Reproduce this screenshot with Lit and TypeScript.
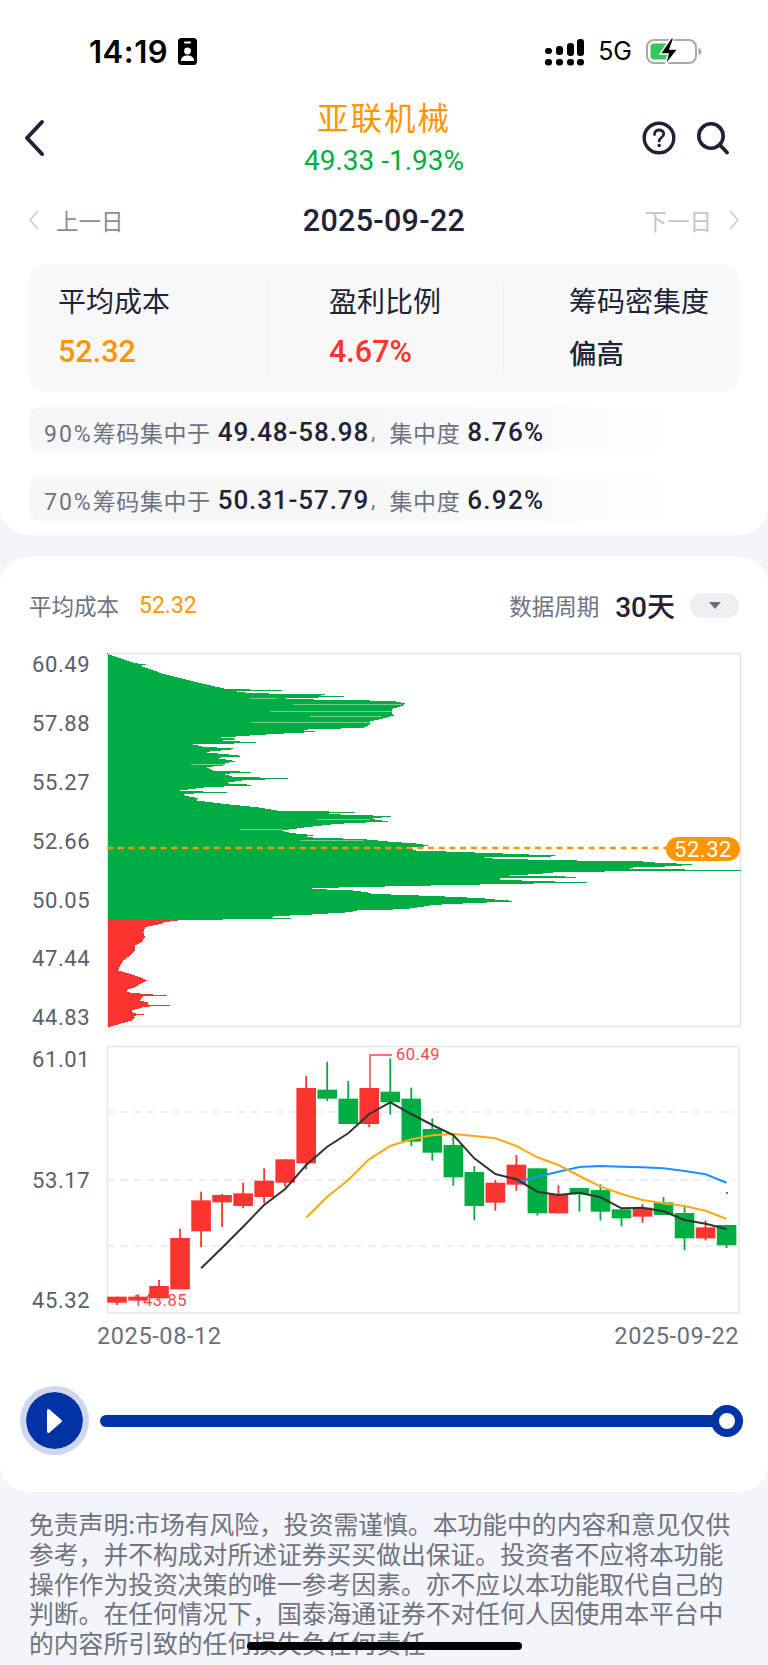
import { LitElement, css, html, svg } from "lit";
import { customElement } from "lit/decorators.js";

const GREEN = "#00ad42";
const RED = "#fb342f";
const ORANGE = "#ff9500";

/** Convert points read from a 3x crop ([cropY, cropX]) to page coordinates ([y, x]). */
function crop(ox: number, oy: number, pts: number[][]): number[][] {
  return pts.map(([y, x]) => [oy + y / 3, ox + x / 3]);
}

// Right edge of the chip distribution, top to bottom.
const PROFILE: number[][] = [
  ...crop(90, 640, [
    [40, 52], [68, 135], [72, 168], [76, 150], [100, 220], [125, 320], [146, 410], [149, 620], [153, 440],
    [158, 480], [163, 760], [166, 660], [169, 815], [173, 560], [178, 700], [181, 910], [189, 945], [197, 935],
    [205, 905], [216, 905], [225, 912], [235, 875], [243, 840], [252, 840], [262, 820], [268, 620], [274, 685],
    [280, 560], [285, 480], [292, 380], [295, 460], [300, 400], [307, 515], [312, 310], [318, 335], [325, 445],
    [335, 340], [347, 470], [352, 375], [362, 440], [368, 405], [375, 400], [380, 350], [390, 370], [395, 505],
    [400, 400], [408, 425], [414, 593], [420, 455], [428, 400], [434, 508], [440, 350], [450, 270], [456, 410],
    [460, 280], [466, 285], [473, 325], [480, 320], [490, 400], [500, 500], [510, 560], [515, 820], [520, 690],
    [527, 912], [535, 840], [543, 895], [550, 740], [560, 650], [570, 575], [578, 605], [584, 675], [590, 640],
    [596, 820], [603, 895], [610, 990], [616, 1020],
  ]),
  ...crop(400, 820, [
    [75, 148], [80, 20], [90, 48], [97, 255], [107, 517], [111, 255], [115, 285], [120, 530], [123, 730],
    [127, 775], [131, 885], [137, 828], [143, 635], [150, 1022], [154, 480], [160, 420], [165, 330], [170, 603],
    [174, 300], [178, 300], [186, 562], [193, 185],
  ]),
  ...crop(90, 830, [[168, 885], [171, 748], [175, 640], [179, 780], [185, 830], [190, 845], [194, 960]]),
  ...crop(400, 820, [[228, 135], [233, 245], [238, 295], [242, 360], [248, 210], [253, 105], [266, 15]]),
  ...crop(90, 830, [
    [240, 800], [245, 780], [252, 665], [256, 580], [260, 525], [264, 603], [268, 330], [269.5, 270],
    [270, 265], [275, 225], [280, 215], [285, 190], [290, 165], [305, 160], [320, 165], [335, 155], [345, 135],
    [360, 135], [375, 120], [390, 100], [405, 90], [420, 85], [430, 120], [440, 150], [450, 172], [460, 150],
    [470, 135], [478, 110], [485, 110], [490, 160], [495, 232], [498, 160], [503, 155], [510, 150], [516, 175],
    [522, 175], [525, 240], [529, 160], [532, 155], [540, 125], [548, 130], [552, 162], [556, 130], [562, 135],
    [570, 125], [580, 90], [590, 55],
  ]),
];

// Thin paler rows inside the green mass: [cropY, fromX, toX], crop at (90,640).
const PALE_ROWS = [
  [173, 480, 560], [193, 610, 935], [212, 540, 905], [229, 660, 875], [247, 484, 840], [372, 303, 405],
  [538, 680, 840], [568, 450, 575], [600, 630, 820],
];

const RED_FROM = 920;

/** One 1px row per y, interpolated along the profile. */
function profilePath(from: number, to: number): string {
  let d = "";
  let i = 0;
  for (let y = from; y < to; y++) {
    while (i < PROFILE.length - 2 && PROFILE[i + 1][0] < y) i++;
    const [y0, x0] = PROFILE[i];
    const [y1, x1] = PROFILE[i + 1];
    const t = y1 === y0 ? 0 : Math.min(1, Math.max(0, (y - y0) / (y1 - y0)));
    d += `M107.5 ${y}H${(x0 + (x1 - x0) * t).toFixed(1)}v1H107.5z`;
  }
  return d;
}

// up = red, down = green: [wickTop, bodyTop, bodyBottom, wickBottom] in crop Y units
const CANDLES: { up: boolean; v: number[] }[] = [
  [1, 770, 770, 788, 795], [1, 768, 770, 782, 782], [1, 720, 738, 775, 775], [1, 566, 594, 748, 748],
  [1, 455, 481, 574, 622], [1, 462, 465, 487, 561], [1, 428, 460, 498, 505], [1, 385, 422, 471, 490],
  [1, 358, 358, 428, 440], [1, 108, 144, 370, 388], [0, 65, 149, 176, 183], [0, 123, 176, 252, 252],
  [1, 144, 144, 252, 262], [0, 55, 155, 187, 224], [0, 143, 176, 305, 318], [0, 235, 267, 338, 362],
  [0, 282, 315, 412, 437], [0, 378, 396, 498, 541], [1, 420, 428, 488, 512], [1, 345, 374, 434, 452],
  [0, 385, 385, 520, 527], [1, 436, 462, 520, 520], [0, 444, 444, 463, 515], [0, 433, 450, 515, 542],
  [0, 508, 508, 535, 559], [1, 492, 503, 530, 548], [0, 471, 487, 525, 525], [0, 497, 519, 595, 631],
  [1, 541, 562, 595, 601], [0, 555, 555, 616, 624],
].map(([u, ...v]) => ({ up: u === 1, v }));

const MA5 = [685, 623, 560, 495, 447, 375, 320, 280, 222, 187, 222, 255, 285, 355, 402, 418, 455, 465, 458, 472, 505, 503, 514, 540, 551, 567];
const MA10 = [533, 470, 420, 358, 318, 298, 286, 282, 288, 295, 318, 352, 375, 408, 440, 462, 480, 490, 498, 512, 537];
const MA20 = [425, 410, 395, 381, 378, 380, 382, 385, 393, 403, 428];

const cx = (i: number) => 117 + 21.02 * i;
const cy = (v: number) => 1040 + v / 3;

function maLine(values: number[], start: number): string {
  return values.map((v, i) => `${cx(start + i).toFixed(1)},${cy(v).toFixed(1)}`).join(" ");
}

const PRICE_LABELS = [
  ["60.49", 664], ["57.88", 723], ["55.27", 782], ["52.66", 841], ["50.05", 900], ["47.44", 958], ["44.83", 1017],
] as const;
const KLINE_LABELS = [["61.01", 1059], ["53.17", 1180], ["45.32", 1300]] as const;

const DISCLAIMER =
  "免责声明:市场有风险，投资需谨慎。本功能中的内容和意见仅供参考，并不构成对所述证券买买做出保证。投资者不应将本功能操作作为投资决策的唯一参考因素。亦不应以本功能取代自己的判断。在任何情况下，国泰海通证券不对任何人因使用本平台中的内容所引致的任何损失负任何责任";

@customElement("app-root")
export class AppRoot extends LitElement {
  private renderSignal() {
    const cols = [
      [545, 47, 6],
      [556, 45, 9],
      [567, 42, 13],
      [577, 38, 17],
    ];
    return html`<svg class="signal" viewBox="545 36 40 30" width="40" height="30">
      ${cols.map(
        ([x, y, h]) => svg`
          <rect x=${x} y=${y} width="7" height=${h} rx="3" fill="#000" />
          <rect x=${x} y="58" width="7" height="6.5" rx="3" fill="#000" />`,
      )}
    </svg>`;
  }

  private renderBattery() {
    return html`<svg class="battery" viewBox="0 0 56 30" width="56" height="30">
      <rect x="1" y="3" width="49" height="23" rx="7" fill="none" stroke="#a9a9a9" stroke-width="2" />
      <path d="M52.5 11c2 .5 3 2 3 3.5s-1 3-3 3.5z" fill="#a9a9a9" />
      <rect x="4.5" y="6.5" width="20" height="16" rx="3.5" fill="#34c759" />
      <path d="M25 1 L14 17 H22 L19 29 L32 12 H24 L28 1 Z" fill="#000" stroke="#fff" stroke-width="1.5" />
    </svg>`;
  }

  private renderDistribution() {
    return html`<svg class="chart" viewBox="0 640 768 400" width="768" height="400">
      ${PRICE_LABELS.map(([t, y]) => svg`<text class="axis" x="32" y=${y + 8}>${t}</text>`)}
      <rect x="107.5" y="653.5" width="633" height="373" fill="#fff" stroke="#e2e3e6" stroke-width="1.5" />
      <path d=${profilePath(653, RED_FROM)} fill=${GREEN} shape-rendering="crispEdges" />
      <path d=${profilePath(RED_FROM, 1027)} fill=${RED} shape-rendering="crispEdges" />
      ${PALE_ROWS.map(
        ([y, a, b]) => svg`<rect x=${90 + a / 3} y=${Math.round(640 + y / 3)} width=${(b - a) / 3} height="1" fill="#6fcf95" />`,
      )}
      <line x1="107" y1="848" x2="668" y2="848" stroke=${ORANGE} stroke-width="2.5" stroke-dasharray="6 4.7" />
      <rect x="666" y="837" width="74" height="24" rx="12" fill=${ORANGE} />
      <text class="pill" x="703" y="857" text-anchor="middle">52.32</text>
    </svg>`;
  }

  private renderKline() {
    return html`<svg class="chart" viewBox="0 1040 768 280" width="768" height="280">
      ${KLINE_LABELS.map(([t, y]) => svg`<text class="axis" x="32" y=${y + 8}>${t}</text>`)}
      <rect x="107.5" y="1046.5" width="631.5" height="266.5" fill="#fff" stroke="#e6e7ea" stroke-width="1.5" />
      ${[1112, 1180, 1246].map(
        (y) => svg`<line x1="108" y1=${y} x2="735" y2=${y} stroke="#dcdcdc" stroke-width="1.2" stroke-dasharray="7 6" />`,
      )}
      <text class="mark" x="187" y="1305.5" text-anchor="end">143.85</text>
      ${CANDLES.map(({ up, v }, i) => {
        const color = up ? RED : GREEN;
        const x = cx(i);
        return svg`
          <line x1=${x} y1=${cy(v[0])} x2=${x} y2=${cy(v[3])} stroke=${color} stroke-width="1.8" />
          <rect x=${x - 9.8} y=${cy(v[1])} width="19.6" height=${cy(v[2]) - cy(v[1])} fill=${color} />`;
      })}
      <path d="M370 1088 V1055 H392" fill="none" stroke="#f5484a" stroke-width="1.5" />
      <text class="mark" x="396" y="1060">60.49</text>
      <polyline points=${maLine(MA20, 19)} fill="none" stroke="#1e90ff" stroke-width="2" />
      <polyline points=${maLine(MA10, 9)} fill="none" stroke="#ffa90d" stroke-width="2" />
      <polyline points=${maLine(MA5, 4)} fill="none" stroke="#333" stroke-width="2" />
      <rect x="726" y="1192" width="2" height="2" fill="#b04be8" />
    </svg>`;
  }

  private renderConcentration(pct: string, range: string, ratio: string) {
    return html`<div class="conc">
      <span class="lab"><span class="pct">${pct}</span>筹码集中于</span>
      <b class="range">${range}</b><span class="comma">,</span>
      <span class="lab">集中度</span>
      <b class="ratio">${ratio}</b>
    </div>`;
  }

  render() {
    return html`
      <section class="card top">
        <div class="status">
          <div class="clock">
            <span class="time">14:19</span>
            <svg viewBox="0 0 19 27" width="19" height="27">
              <rect width="19" height="27" rx="3.5" fill="#000" />
              <rect x="6" y="3.5" width="7" height="2" rx="1" fill="#fff" />
              <circle cx="9.5" cy="13" r="3.4" fill="#fff" />
              <path d="M3 23c0-4 3-5.5 6.5-5.5S16 19 16 23z" fill="#fff" />
            </svg>
          </div>
          <div class="cell">
            ${this.renderSignal()}
            <span class="net">5G</span>
            ${this.renderBattery()}
          </div>
        </div>

        <header class="nav">
          <svg class="back" viewBox="0 0 24 38" width="24" height="38">
            <path d="M20 3 L5 19 L20 35" fill="none" stroke="#1f2336" stroke-width="4" stroke-linecap="round" stroke-linejoin="round" />
          </svg>
          <div class="title">
            <div class="name">亚联机械</div>
            <div class="quote">49.33 -1.93%</div>
          </div>
          <div class="actions">
            <svg viewBox="0 0 34 34" width="34" height="34">
              <circle cx="17" cy="17" r="14.8" fill="none" stroke="#1f2336" stroke-width="3.4" />
              <path d="M12.5 13.5c0-3 2.2-4.500 4.700-4.500s4.500 1.600 4.500 4c0 3.500-4.500 3.500-4.500 7" fill="none" stroke="#1f2336" stroke-width="2.8" stroke-linecap="round" />
              <circle cx="17.2" cy="24.5" r="1.8" fill="#1f2336" />
            </svg>
            <svg viewBox="0 0 34 34" width="34" height="34">
              <circle cx="15" cy="15" r="12.2" fill="none" stroke="#1f2336" stroke-width="3.6" />
              <path d="M24 24 L31 31.5" fill="none" stroke="#1f2336" stroke-width="3.8" stroke-linecap="round" />
            </svg>
          </div>
        </header>

        <div class="dates">
          <div class="day prev">
            <svg viewBox="0 0 12 22" width="12" height="22"><path d="M10 2 L2 11 L10 20" fill="none" stroke="#c8cad2" stroke-width="1.5" /></svg>
            <span>上一日</span>
          </div>
          <div class="date">2025-09-22</div>
          <div class="day next">
            <span>下一日</span>
            <svg viewBox="0 0 12 22" width="12" height="22"><path d="M2 2 L10 11 L2 20" fill="none" stroke="#c8cad2" stroke-width="1.5" /></svg>
          </div>
        </div>

        <div class="stats">
          <div class="stat first">
            <div class="stat-label">平均成本</div>
            <div class="stat-value orange">52.32</div>
          </div>
          <div class="stat second">
            <div class="stat-label">盈利比例</div>
            <div class="stat-value red">4.67%</div>
          </div>
          <div class="stat third">
            <div class="stat-label">筹码密集度</div>
            <div class="stat-text">偏高</div>
          </div>
        </div>

        ${this.renderConcentration("90%", "49.48-58.98", "8.76%")}
        ${this.renderConcentration("70%", "50.31-57.79", "6.92%")}
      </section>

      <section class="card bottom">
        <div class="chart-head">
          <div class="head-left">
            <span class="muted">平均成本</span>
            <span class="head-value">52.32</span>
          </div>
          <div class="head-right">
            <span class="muted">数据周期</span>
            <span class="period">30天</span>
            <span class="select"><i class="caret"></i></span>
          </div>
        </div>
        ${this.renderDistribution()} ${this.renderKline()}
        <div class="axis-dates">
          <span>2025-08-12</span>
          <span>2025-09-22</span>
        </div>
        <div class="player">
          <div class="play">
            <svg viewBox="0 0 18 26" width="18" height="26">
              <path d="M3.5 1.5 L15.5 12 Q16.5 13 15.5 14 L3.5 24.5 Q1 26 1 23 V3 Q1 0 3.5 1.5 Z" fill="#fff" />
            </svg>
          </div>
          <div class="track"><span class="thumb"></span></div>
        </div>
      </section>

      <p class="disclaimer">${DISCLAIMER}</p>
      <div class="home"></div>
    `;
  }

  static styles = css`
    :host {
      display: block;
      position: relative;
      height: 1665px;
      overflow: hidden;
      background: #f4f5fa;
      font-family: Roboto, "Noto Sans CJK SC", sans-serif;
      color: #1f2336;
    }

    .card {
      background: #fff;
    }

    .top {
      height: 535px;
      border-radius: 0 0 28px 28px;
      box-sizing: border-box;
    }

    .bottom {
      margin-top: 22px;
      height: 935px;
      border-radius: 28px;
      box-sizing: border-box;
      padding-top: 29px;
    }

    .status {
      height: 100px;
      display: flex;
      align-items: center;
      justify-content: space-between;
      box-sizing: border-box;
      padding: 3px 66px 0 89px;
      color: #000;
    }

    .clock,
    .cell {
      display: flex;
      align-items: center;
    }

    .clock {
      gap: 10px;
    }

    .time {
      font-family: Inter, sans-serif;
      font-size: 31px;
      font-weight: 600;
      letter-spacing: 0.5px;
      line-height: 1;
    }

    .net {
      font-family: Inter, sans-serif;
      font-size: 25px;
      margin: 0 14px 0 13px;
      line-height: 1;
    }

    .nav {
      height: 75px;
      display: grid;
      grid-template-columns: 1fr auto 1fr;
      align-items: center;
      padding: 0 22px;
    }

    .back {
      margin-top: -4px;
    }

    .title {
      text-align: center;
      padding-bottom: 2px;
    }

    .name {
      color: #ff9500;
      font-size: 31.5px;
      letter-spacing: 2px;
      line-height: 40px;
    }

    .quote {
      color: #00ad42;
      font-size: 28px;
      line-height: 34px;
      margin-top: 4px;
    }

    .actions {
      display: flex;
      justify-content: flex-end;
      gap: 20px;
      margin-top: -4px;
      padding-right: 16px;
    }

    .dates {
      height: 50px;
      margin-top: 20px;
      display: flex;
      align-items: center;
      justify-content: space-between;
      padding: 0 28px;
    }

    .day {
      display: flex;
      align-items: center;
      gap: 16px;
      font-size: 22.5px;
      color: #8a8d99;
    }

    .day.next {
      color: #c3c5cd;
    }

    .date {
      font-size: 30.5px;
      font-weight: 500;
      letter-spacing: 0.3px;
    }

    .stats {
      margin: 19px 29px 0;
      height: 128px;
      padding: 18px 0;
      box-sizing: border-box;
      background: #f8f8f8;
      border-radius: 14px;
      display: grid;
      grid-template-columns: 237px 237px 1fr;
    }

    .stat {
      border-left: 1.5px solid #eeeeee;
      box-sizing: border-box;
    }

    .stat.first {
      border-left: 0;
      padding-left: 29px;
    }

    .stat.second {
      padding-left: 62px;
    }

    .stat.third {
      padding-left: 65px;
    }

    .stat-label {
      font-size: 28px;
      line-height: 36px;
      white-space: nowrap;
      margin-top: 3px;
    }

    .stat-value {
      font-size: 30.5px;
      font-weight: 500;
      line-height: 36px;
      margin-top: 13px;
    }

    .stat-text {
      font-size: 27.5px;
      font-weight: 500;
      line-height: 36px;
      margin-top: 16px;
    }

    .orange {
      color: #ff9500;
    }

    .red {
      color: #fb342f;
    }

    .conc {
      margin: 15px 29px 0;
      height: 46px;
      box-sizing: border-box;
      padding: 3px 0 0 15px;
      display: flex;
      align-items: center;
      border-radius: 12px;
      background: linear-gradient(90deg, #f7f7f8 50%, #ffffff 95%);
      white-space: nowrap;
    }

    .conc + .conc {
      margin-top: 22px;
    }

    .lab {
      font-size: 23px;
      color: #6f7280;
      letter-spacing: 0.6px;
    }

    .pct {
      letter-spacing: 2px;
    }

    .range,
    .ratio {
      font-size: 26px;
      font-weight: 500;
      letter-spacing: 0.9px;
    }

    .range {
      margin-left: 7px;
    }

    .ratio {
      margin-left: 7px;
      letter-spacing: 1.3px;
    }

    .comma {
      font-size: 22px;
      color: #6f7280;
      margin-right: 14px;
      margin-left: 2px;
    }

    .chart-head {
      height: 38px;
      padding: 0 29px;
      display: flex;
      align-items: center;
      justify-content: space-between;
    }

    .head-left,
    .head-right {
      display: flex;
      align-items: center;
    }

    .muted {
      font-size: 22.5px;
      color: #6f7280;
    }

    .head-value {
      font-size: 23px;
      color: #ff9500;
      margin-left: 20px;
    }

    .period {
      font-size: 28px;
      font-weight: 500;
      margin-left: 16px;
    }

    .select {
      width: 49px;
      height: 25px;
      margin-left: 15px;
      border-radius: 12px;
      background: #eeeff2;
      display: flex;
      align-items: center;
      justify-content: center;
    }

    .caret {
      width: 0;
      height: 0;
      border-left: 6px solid transparent;
      border-right: 6px solid transparent;
      border-top: 7px solid #6a6d78;
    }

    .chart {
      display: block;
    }

    .chart-head + .chart {
      margin-top: 16px;
    }

    .chart text {
      font-family: Roboto, sans-serif;
    }

    .axis {
      font-size: 22px;
      fill: #5b5e69;
      letter-spacing: 0.6px;
    }

    .mark {
      font-size: 16.5px;
      fill: #f5484a;
      letter-spacing: 0.5px;
    }

    .pill {
      font-size: 22px;
      fill: #fff;
      letter-spacing: 0.5px;
    }

    .axis-dates {
      height: 32px;
      padding: 0 29px 0 97px;
      display: flex;
      justify-content: space-between;
      align-items: center;
      font-size: 23.5px;
      letter-spacing: 0.6px;
      color: #6b6e7a;
    }

    .player {
      margin-top: 34px;
      padding: 0 25px 0 20px;
      display: flex;
      align-items: center;
      gap: 11px;
    }

    .play {
      width: 57px;
      height: 57px;
      border: 6px solid #cfd6ee;
      border-radius: 50%;
      background: #0033a5;
      background-clip: padding-box;
      display: flex;
      align-items: center;
      justify-content: center;
      flex: none;
    }

    .track {
      flex: 1;
      height: 12px;
      border-radius: 6px;
      background: #0033a5;
      position: relative;
    }

    .thumb {
      position: absolute;
      right: 0;
      top: -10px;
      width: 16px;
      height: 16px;
      border: 8px solid #0033a5;
      border-radius: 50%;
      background: #fff;
    }

    .disclaimer {
      margin: 17px 29px 0;
      font-size: 24.8px;
      line-height: 29.8px;
      color: #6f7280;
      font-family: "Noto Sans CJK SC", sans-serif;
    }

    .home {
      position: absolute;
      left: 247px;
      top: 1642px;
      width: 275px;
      height: 8px;
      border-radius: 4px;
      background: #000;
    }
  `;
}
